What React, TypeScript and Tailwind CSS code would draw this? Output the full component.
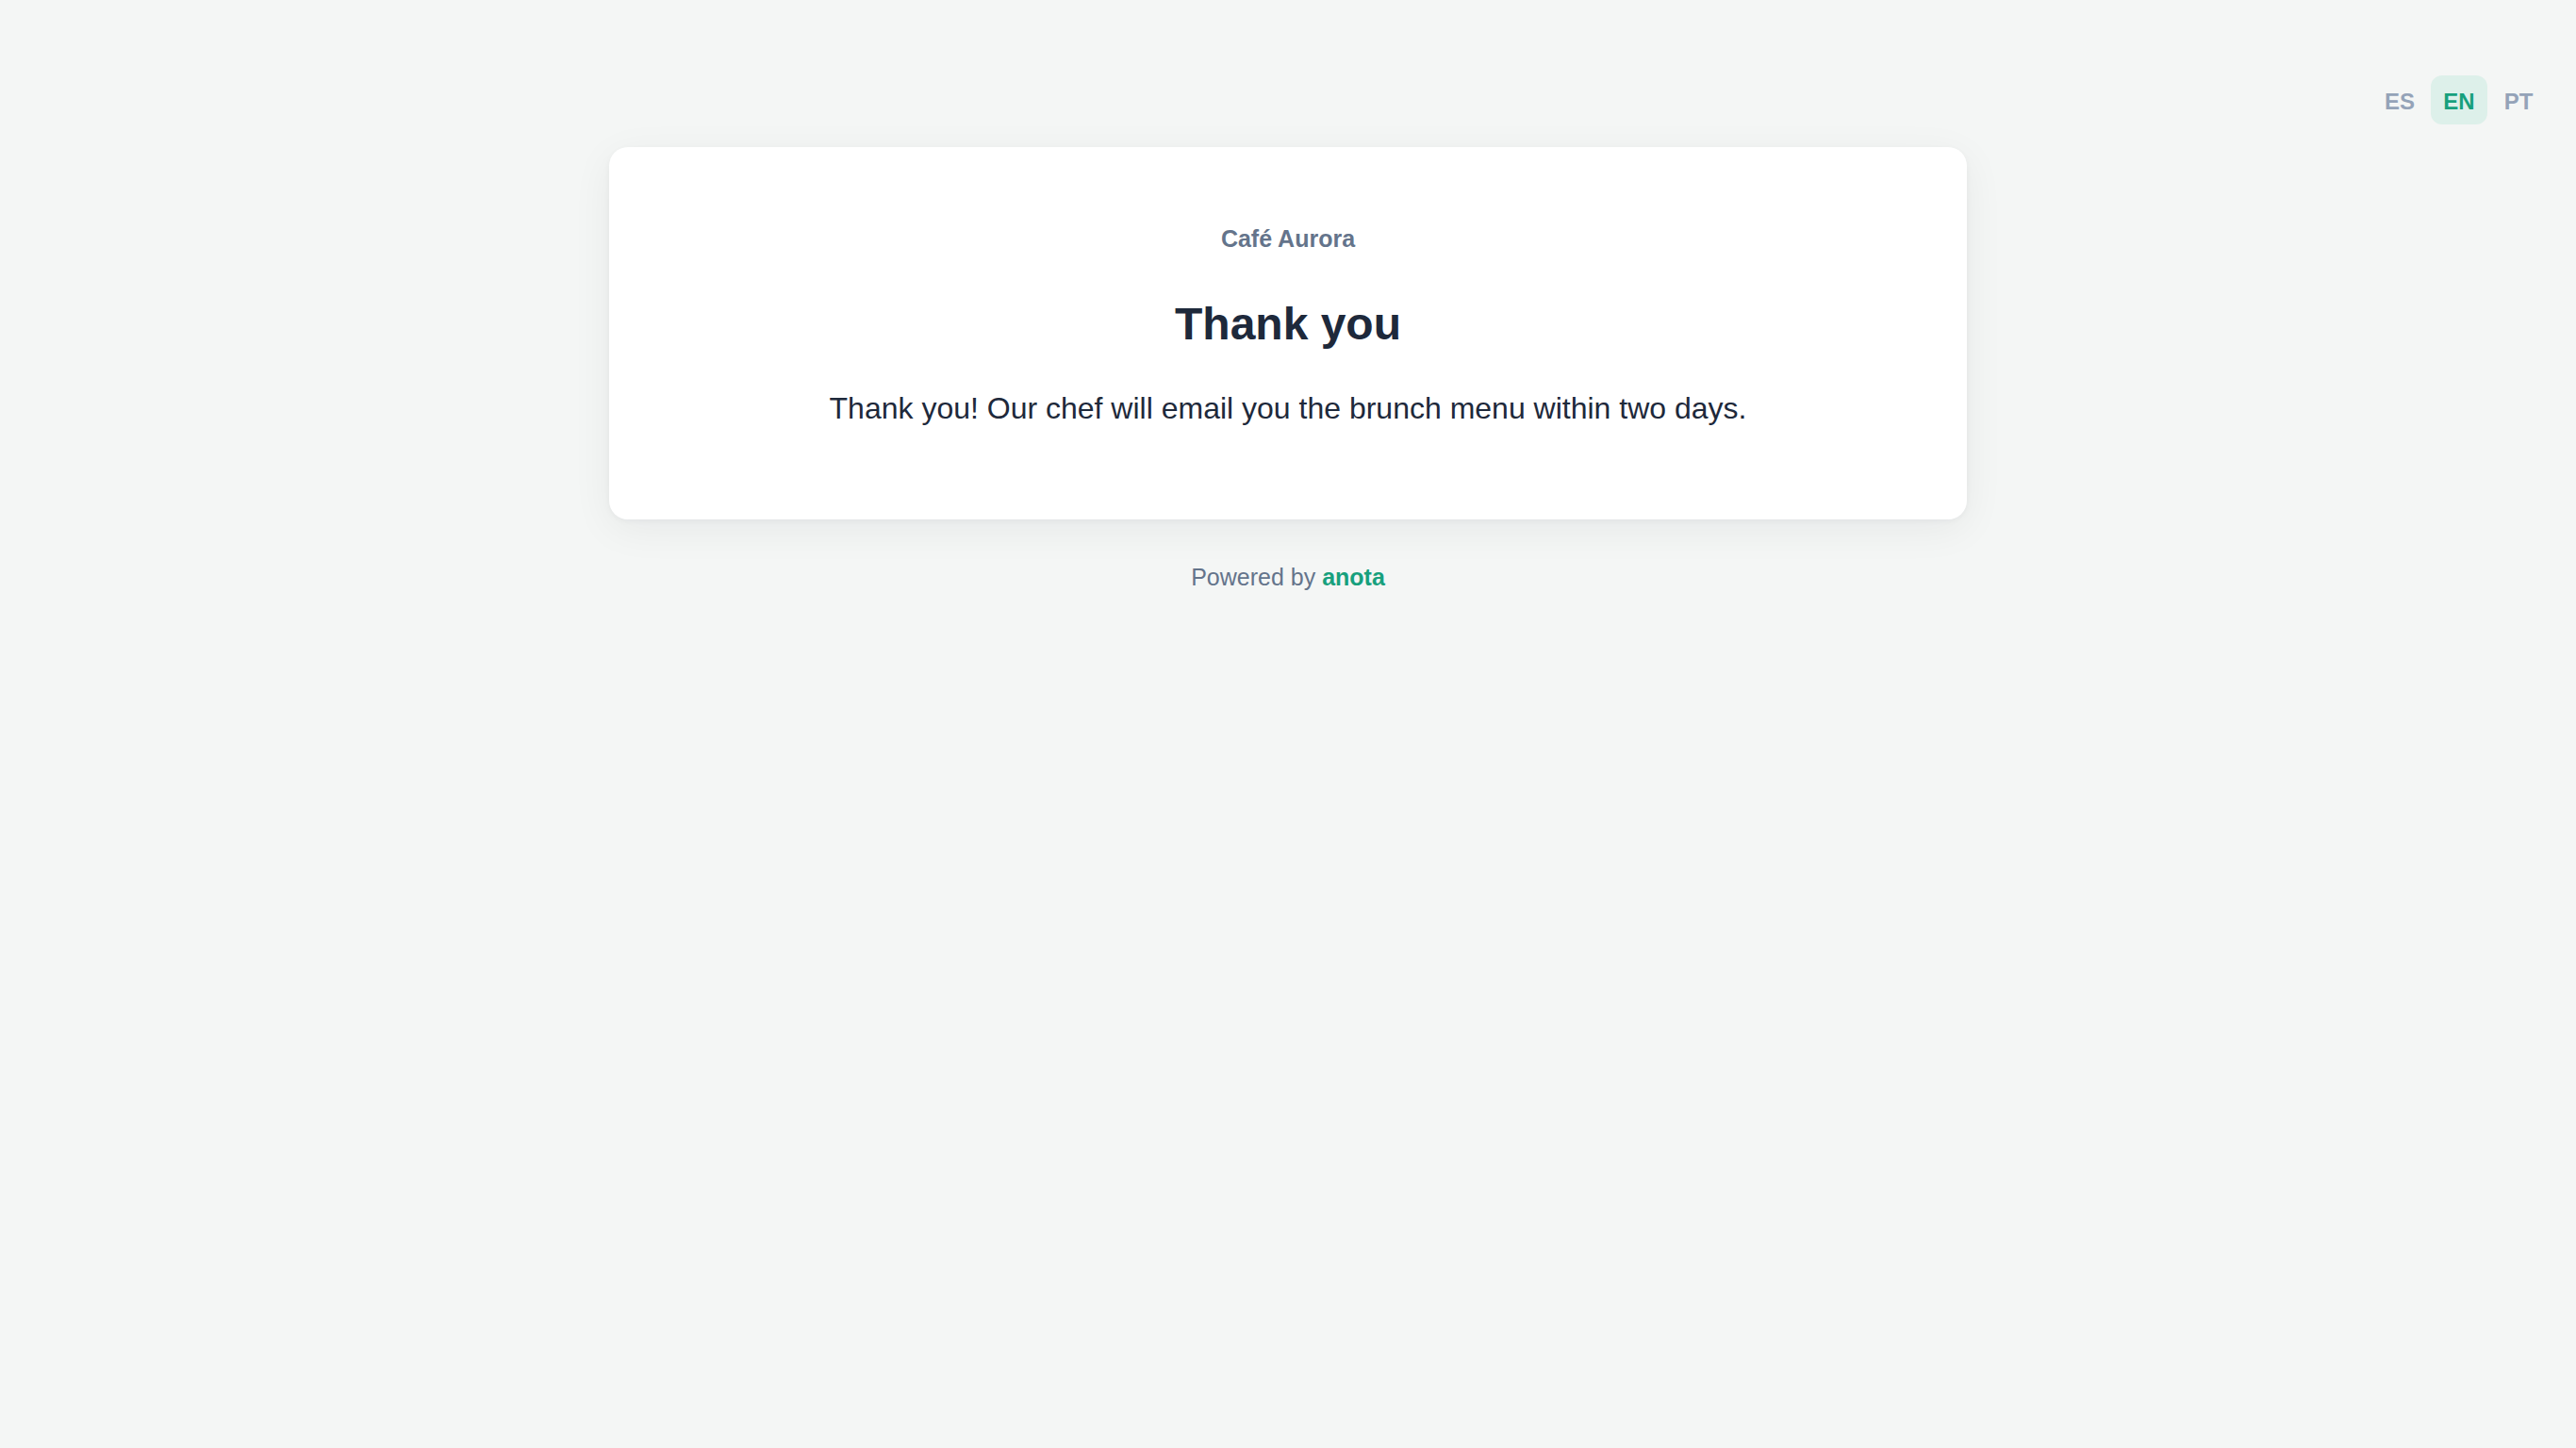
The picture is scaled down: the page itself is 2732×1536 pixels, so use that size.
import React from "react";

const font = { fontFamily: '"Liberation Sans", Arial, sans-serif' };

export default function App() {
  const langs = ["ES", "EN", "PT"];
  return (
    <div
      className="min-h-screen w-full bg-[#f4f6f5] flex flex-col font-['Liberation_Sans',Arial,sans-serif]"
      style={font}
    >
      <div className="flex justify-end pt-[80px] pr-[31px]">
        <div className="flex gap-[3px]">
          {langs.map((l) => (
            <button
              key={l}
              className={
                l === "EN"
                  ? "w-[60px] h-[52px] pt-[3px] rounded-[12px] flex items-center justify-center text-[24px] leading-none font-bold bg-[#ddf0ea] text-[#17a07d]"
                  : "w-[60px] h-[52px] pt-[3px] rounded-[12px] flex items-center justify-center text-[24px] leading-none font-bold text-[#94a3b8]"
              }
            >
              {l}
            </button>
          ))}
        </div>
      </div>

      <div className="mt-[24px] mx-auto w-[1440px] bg-white rounded-[20px] shadow-[0_2px_6px_rgba(15,23,42,0.04),0_10px_44px_rgba(15,23,42,0.06)] pt-[77px] pb-[94px] flex flex-col items-center text-center">
        <div className="text-[25px] leading-[40px] font-bold text-[#64748b]">
          Café Aurora
        </div>
        <h1 className="mt-[39px] text-[48px] leading-[64px] font-bold text-[#1e293b]">
          Thank you
        </h1>
        <p className="mt-[33px] text-[32px] leading-[48px] text-[#1e293b]">
          Thank you! Our chef will email you the brunch menu within two days.
        </p>
      </div>

      <div className="mt-[41px] text-center text-[25px] leading-[40px] text-[#64748b]">
        Powered by <span className="font-bold text-[#17a07d]">anota</span>
      </div>
    </div>
  );
}
